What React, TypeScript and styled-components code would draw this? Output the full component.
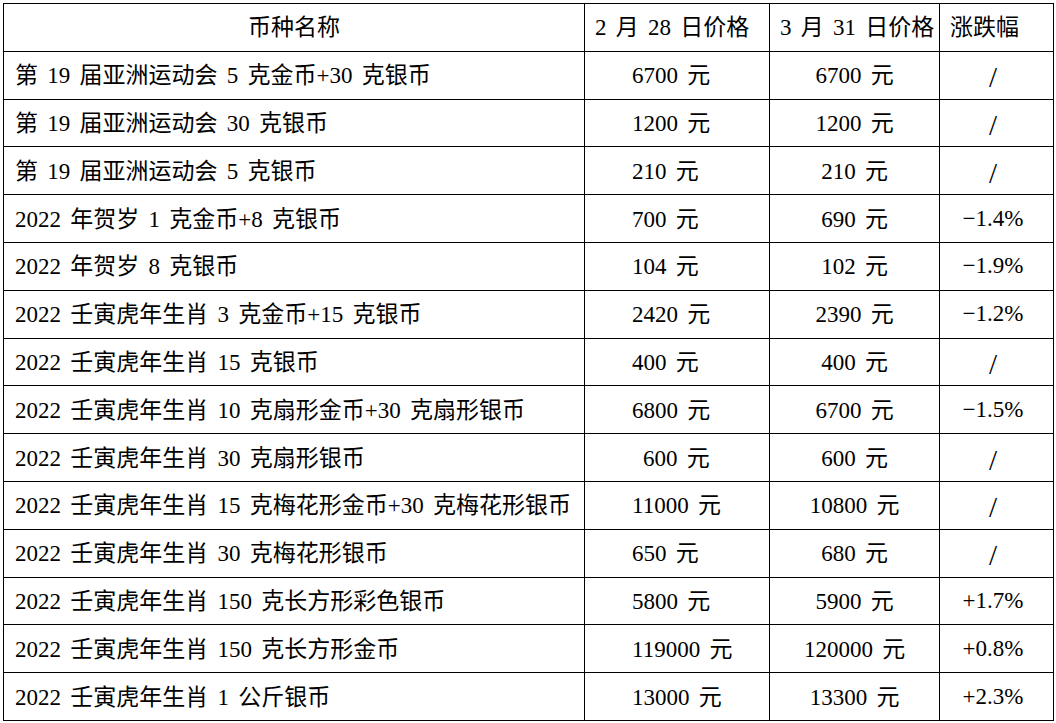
import styled, { createGlobalStyle } from "styled-components";

const GlobalStyle = createGlobalStyle`
  body {
    margin: 0;
    background: #fff;
  }
`;

const Page = styled.div`
  padding: 3px;
`;

const Table = styled.table`
  width: 1050px;
  border-collapse: collapse;
  table-layout: fixed;
  font-family: "Liberation Serif", "Noto Sans CJK SC", serif;
  font-size: 23px;
  word-spacing: 3.5px;
  color: #000;
`;

const Row = styled.tr`
  height: 47.8px;
`;

type CellProps = {
  $align?: "left" | "center";
  $pad?: number;
  $padR?: number;
  $padT?: number;
  $padB?: number;
};

const Th = styled.th<CellProps>`
  border: 1px solid #000;
  font-weight: normal;
  text-align: ${(p) => p.$align || "left"};
  padding: 0 0 4px ${(p) => (p.$pad ?? 10)}px;
  white-space: nowrap;
`;

const Td = styled.td<CellProps>`
  border: 1px solid #000;
  text-align: ${(p) => p.$align || "left"};
  padding: ${(p) => p.$padT ?? 0}px ${(p) => p.$padR ?? 0}px ${(p) => p.$padB ?? 4}px
    ${(p) => p.$pad ?? 0}px;
  white-space: nowrap;
`;

const Slash = styled.span`
  font-size: 29px;
  line-height: 1;
`;

type Coin = { name: string; feb: string; mar: string; change: string; febPad?: number };

const coins: Coin[] = [
  { name: "第 19 届亚洲运动会 5 克金币+30 克银币", feb: "6700 元", mar: "6700 元", change: "/" },
  { name: "第 19 届亚洲运动会 30 克银币", feb: "1200 元", mar: "1200 元", change: "/" },
  { name: "第 19 届亚洲运动会 5 克银币", feb: "210 元", mar: "210 元", change: "/" },
  { name: "2022 年贺岁 1 克金币+8 克银币", feb: "700 元", mar: "690 元", change: "−1.4%" },
  { name: "2022 年贺岁 8 克银币", feb: "104 元", mar: "102 元", change: "−1.9%" },
  { name: "2022 壬寅虎年生肖 3 克金币+15 克银币", feb: "2420 元", mar: "2390 元", change: "−1.2%" },
  { name: "2022 壬寅虎年生肖 15 克银币", feb: "400 元", mar: "400 元", change: "/" },
  { name: "2022 壬寅虎年生肖 10 克扇形金币+30 克扇形银币", feb: "6800 元", mar: "6700 元", change: "−1.5%" },
  { name: "2022 壬寅虎年生肖 30 克扇形银币", feb: "600 元", mar: "600 元", change: "/", febPad: 58 },
  { name: "2022 壬寅虎年生肖 15 克梅花形金币+30 克梅花形银币", feb: "11000 元", mar: "10800 元", change: "/" },
  { name: "2022 壬寅虎年生肖 30 克梅花形银币", feb: "650 元", mar: "680 元", change: "/" },
  { name: "2022 壬寅虎年生肖 150 克长方形彩色银币", feb: "5800 元", mar: "5900 元", change: "+1.7%" },
  { name: "2022 壬寅虎年生肖 150 克长方形金币", feb: "119000 元", mar: "120000 元", change: "+0.8%" },
  { name: "2022 壬寅虎年生肖 1 公斤银币", feb: "13000 元", mar: "13300 元", change: "+2.3%" },
];

function App() {
  return (
    <Page>
      <GlobalStyle />
      <Table>
        <colgroup>
          <col style={{ width: 581 }} />
          <col style={{ width: 185 }} />
          <col style={{ width: 170 }} />
          <col style={{ width: 114 }} />
        </colgroup>
        <thead>
          <Row>
            <Th $align="center" $pad={0}>币种名称</Th>
            <Th>2 月 28 日价格</Th>
            <Th>3 月 31 日价格</Th>
            <Th>涨跌幅</Th>
          </Row>
        </thead>
        <tbody>
          {coins.map((c) => {
            const flat = c.change === "/";
            return (
              <Row key={c.name}>
                <Td $pad={11}>{c.name}</Td>
                <Td $pad={c.febPad ?? 47}>{c.feb}</Td>
                <Td $align="center">{c.mar}</Td>
                <Td $align="center" $padR={7} $padT={flat ? 6 : 0} $padB={0}>
                  {flat ? <Slash>/</Slash> : c.change}
                </Td>
              </Row>
            );
          })}
        </tbody>
      </Table>
    </Page>
  );
}

export default App;
